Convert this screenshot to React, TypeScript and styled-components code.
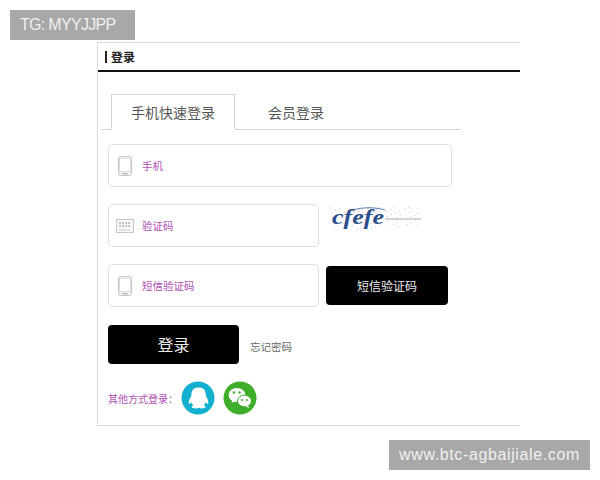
import * as React from 'react';
import styled, { createGlobalStyle } from 'styled-components';

const GlobalStyle = createGlobalStyle`
  html, body {
    margin: 0;
    padding: 0;
    background: #fff;
    font-family: "Liberation Sans", "Noto Sans CJK SC", sans-serif;
  }
`;

const PhoneIcon = () => (
  <svg width="14" height="20" viewBox="0 0 14 20">
    <rect x="0.5" y="0.5" width="13" height="19" rx="2" fill="#f1f1f1" stroke="#c6c6c6" />
    <rect x="1.5" y="2.5" width="11" height="13" fill="#fff" stroke="#dedede" />
    <rect x="4" y="17" width="6" height="1.2" fill="#b5b5b5" />
  </svg>
);

const CodeIcon = () => (
  <svg width="18" height="14" viewBox="0 0 18 14">
    <rect x="0.5" y="0.5" width="17" height="13" fill="#f7f7f7" stroke="#c6c6c6" />
    <path d="M4 3v5M7 3v5M10 3v5M13 3v5" stroke="#aeaeae" strokeWidth="1.4" strokeDasharray="2 1" />
    <path d="M3 11h12" stroke="#d2d2d2" />
  </svg>
);

const QQIcon = () => (
  <svg width="34" height="34" viewBox="0 0 34 34">
    <circle cx="17" cy="17" r="16.5" fill="#12afcf" />
    <path
      d="M17 6.500c-4.300 0-6.600 3.200-6.600 7 0 1-.1 1.800-.6 2.600-1.200 1.900-2.200 4.200-1.900 6.300.1.800.8.700 1.400.1l1.200-1.300c.4 1.300 1 2.300 1.900 3.100-1.100.5-1.800 1.100-1.800 1.800 0 .8 1.800 1.400 4 1.400 1.200 0 2.300-.3 3-.7.700.4 1.800.7 3 .7 2.200 0 4-.6 4-1.400 0-.7-.7-1.300-1.800-1.800.9-.8 1.500-1.800 1.900-3.100l1.200 1.300c.6.600 1.300.7 1.400-.1.300-2.100-.7-4.400-1.900-6.300-.5-.8-.6-1.600-.6-2.600 0-3.800-2.300-7-6.600-7z"
      fill="#fff"
    />
  </svg>
);

const WechatIcon = () => (
  <svg width="34" height="34" viewBox="0 0 34 34">
    <circle cx="17" cy="17" r="16.5" fill="#3fae2a" />
    <ellipse cx="14" cy="14" rx="8.5" ry="7" fill="#fff" />
    <path d="M9.500 18.500l-1 3.500 4-2z" fill="#fff" />
    <ellipse cx="21.500" cy="20" rx="7" ry="5.800" fill="#fff" stroke="#3fae2a" strokeWidth="1" />
    <path d="M25 24.500l1.500 2.500-4-1.500z" fill="#fff" />
    <circle cx="11" cy="11.500" r="1.200" fill="#3fae2a" />
    <circle cx="16.500" cy="11.500" r="1.200" fill="#3fae2a" />
    <circle cx="19" cy="19" r="1" fill="#3fae2a" />
    <circle cx="24" cy="19" r="1" fill="#3fae2a" />
  </svg>
);

const noise = Array.from({ length: 80 }, (_, i) => ({
  x: 1 + ((i * 37) % 92),
  y: 3 + ((i * 23) % 22),
}));

const Captcha = () => (
  <CaptchaBox>
    <svg width="94" height="30" viewBox="0 0 94 30">
      {noise.map((n, i) => (
        <rect key={i} x={n.x} y={n.y} width="1" height="1" fill="#d4d4d4" />
      ))}
      <path d="M56 15h36" stroke="#a4adb7" strokeWidth="1" />
      <path d="M24 6c10-3 22-3 32 0" stroke="#5c7cae" strokeWidth="1" fill="none" />
      <text
        x="3"
        y="20"
        fontFamily="Liberation Serif, serif"
        fontStyle="italic"
        fontWeight="700"
        fontSize="20"
        textLength="52"
        lengthAdjust="spacingAndGlyphs"
        fill="#2c4f8c"
      >
        cfefe
      </text>
    </svg>
  </CaptchaBox>
);

const App = () => {
  return (
    <Page>
      <GlobalStyle />
      <WatermarkTop>TG: MYYJJPP</WatermarkTop>
      <Panel>
        <PanelHeader>
          <HeaderMark />
          <HeaderTitle>登录</HeaderTitle>
        </PanelHeader>
        <Body>
          <Tabs>
            <Tab $active>手机快速登录</Tab>
            <Tab>会员登录</Tab>
          </Tabs>
          <Form>
            <Row>
              <Field $wide>
                <IconSlot><PhoneIcon /></IconSlot>
                <Placeholder>手机</Placeholder>
              </Field>
            </Row>
            <Row>
              <Field>
                <IconSlot><CodeIcon /></IconSlot>
                <Placeholder>验证码</Placeholder>
              </Field>
              <Captcha />
            </Row>
            <Row>
              <Field>
                <IconSlot><PhoneIcon /></IconSlot>
                <Placeholder>短信验证码</Placeholder>
              </Field>
              <SmsButton>短信验证码</SmsButton>
            </Row>
          </Form>
          <SubmitRow>
            <LoginButton>登录</LoginButton>
            <ForgotLink>忘记密码</ForgotLink>
          </SubmitRow>
          <SocialRow>
            <SocialLabel>其他方式登录：</SocialLabel>
            <SocialIcons>
              <QQIcon />
              <WechatIcon />
            </SocialIcons>
          </SocialRow>
        </Body>
      </Panel>
      <WatermarkBottom>www.btc-agbaijiale.com</WatermarkBottom>
    </Page>
  );
};

export default App;

const Page = styled.div`
  position: relative;
  width: 600px;
  height: 480px;
  overflow: hidden;
  padding: 42px 0 0 97px;
  box-sizing: border-box;
`;

const Watermark = styled.div`
  position: absolute;
  height: 30px;
  background: #a8a8a8;
  color: #f0f0f0;
  display: flex;
  align-items: center;
  justify-content: center;
  font-size: 16px;
  font-family: "Liberation Sans", sans-serif;
`;

const WatermarkTop = styled(Watermark)`
  left: 10px;
  top: 10px;
  width: 125px;
  letter-spacing: -0.7px;
  justify-content: flex-start;
  padding-left: 10px;
  box-sizing: border-box;
`;

const WatermarkBottom = styled(Watermark)`
  left: 389px;
  top: 440px;
  width: 201px;
  letter-spacing: 0.62px;
`;

const Panel = styled.div`
  width: 423px;
  height: 384px;
  box-sizing: border-box;
  border: 1px solid #d9d9d9;
  border-right: none;
`;

const PanelHeader = styled.div`
  height: 27px;
  border-bottom: 2px solid #111;
  display: flex;
  align-items: center;
  padding-left: 7px;
  gap: 4px;
`;

const HeaderMark = styled.span`
  width: 2px;
  height: 12px;
  background: #222;
`;

const HeaderTitle = styled.span`
  font-size: 12px;
  font-weight: 700;
  color: #222;
`;

const Body = styled.div`
  padding: 22px 0 0 3px;
`;

const Tabs = styled.div`
  width: 360px;
  height: 36px;
  box-sizing: border-box;
  border-bottom: 1px solid #d4d4d4;
  display: flex;
  align-items: flex-start;
  padding-left: 10px;
`;

const Tab = styled.div<{ $active?: boolean }>`
  width: ${(p) => (p.$active ? '124px' : '122px')};
  height: ${(p) => (p.$active ? '36px' : '35px')};
  box-sizing: border-box;
  display: flex;
  align-items: center;
  justify-content: center;
  font-size: 14px;
  color: #555;
  border: ${(p) => (p.$active ? '1px solid #d4d4d4' : 'none')};
  border-bottom: ${(p) => (p.$active ? '1px solid #fff' : 'none')};
`;

const Form = styled.div`
  display: flex;
  flex-direction: column;
  gap: 17px;
  margin-top: 14px;
  padding-left: 7px;
`;

const Row = styled.div`
  display: flex;
  align-items: center;
  gap: 7px;
`;

const Field = styled.div<{ $wide?: boolean }>`
  width: ${(p) => (p.$wide ? '344px' : '211px')};
  height: 43px;
  box-sizing: border-box;
  border: 1px solid #e0e0e0;
  border-radius: 5px;
  display: flex;
  align-items: center;
  padding-left: 7px;
`;

const IconSlot = styled.span`
  width: 18px;
  display: flex;
  justify-content: center;
  margin-right: 8px;
`;

const Placeholder = styled.span`
  font-size: 10.5px;
  color: #b04fb5;
`;

const CaptchaBox = styled.div`
  width: 94px;
  height: 30px;
  align-self: flex-start;
  margin-left: 3px;
`;

const SmsButton = styled.div`
  width: 122px;
  height: 39px;
  background: #000;
  border-radius: 4px;
  color: #eee;
  font-size: 12px;
  display: flex;
  align-items: center;
  justify-content: center;
`;

const SubmitRow = styled.div`
  display: flex;
  align-items: center;
  gap: 11px;
  margin-top: 18px;
  padding-left: 7px;
`;

const LoginButton = styled.div`
  width: 131px;
  height: 39px;
  box-sizing: border-box;
  padding-bottom: 2px;
  background: #000;
  border-radius: 4px;
  color: #eee;
  font-size: 16px;
  display: flex;
  align-items: center;
  justify-content: center;
`;

const ForgotLink = styled.span`
  font-size: 10.5px;
  color: #666;
  margin-top: 3px;
`;

const SocialRow = styled.div`
  display: flex;
  align-items: center;
  margin-top: 17px;
  padding-left: 7px;
`;

const SocialLabel = styled.span`
  font-size: 10px;
  color: #b04fb5;
  width: 73px;
  white-space: nowrap;
`;

const SocialIcons = styled.div`
  display: flex;
  gap: 8px;
`;
